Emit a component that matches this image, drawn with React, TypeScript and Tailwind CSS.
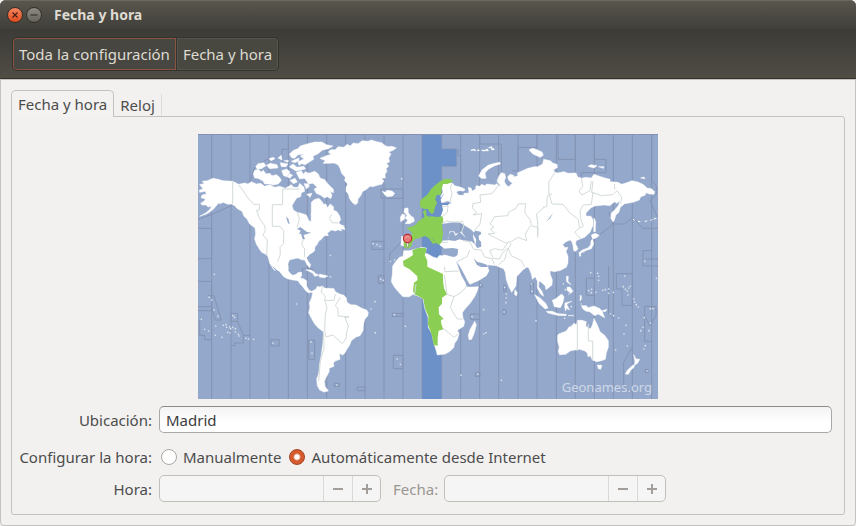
import { useState } from "react";
import type { ReactNode } from "react";

const ZONE_LINES = [
  41, 99, 156, 213, 271, 328, 386, 443, 501, 558, 615, 788, 845, 902, 960, 1017,
  1075, 1132, 1189, 1246, 1303, 1361,
];

function Dots({ points }: { points: number[][] }) {
  return (
    <>
      {points.map(([x, y]) => (
        <circle key={`${x}-${y}`} cx={x} cy={y} r="2.5" />
      ))}
    </>
  );
}

function WorldMap() {
  return (
    <svg viewBox="0 0 1380 795" className="block w-full" role="img" aria-label="Zonas horarias">
      <rect width="1380" height="795" fill="#94a8cb" />
      {/* selected zone */}
      <path d="M672 0H731V45H775V97H731V795H672Z" fill="#6c91c8" />

      {/* zone borders over the sea */}
      <g fill="none" stroke="#8393b4" strokeWidth="3">
        {ZONE_LINES.map((x) => (
          <path key={x} d={`M${x} 0V795`} />
        ))}
        <path d="M0 1.5H1380" />
        <path d="M672 0V795M731 0V45H775V97H731V795" strokeWidth="2" />
        <path d="M0 256L45 240L104 213M0 283H41V374H0M156 145L170 100L213 72M252 80V46H271" />
        <path d="M0 442H41V530H0M28 485H48L70 558H52L41 520M99 538H119V562H99ZM119 562L136 605V627H110V635H99M136 604H156M0 518H41M5 560V604H20V617H41" />
        <path d="M219 617H244V636H219ZM332 619H350V676H332ZM313 420V404H345" />
        <path d="M549 165H615V193H549ZM522 322H558V346H522ZM575 385V360L615 318M541 425H558V448H541ZM583 538H615V547H583ZM586 664H615V704H586ZM478 759H501V770H478ZM409 748H424V757H409Z" />
        <path d="M780 45V65H788V150M845 0V30H910V125M943 110H960V40H1017V0M1080 0V76H1132V0M1189 0V76H1224V116H1150V128" />
        <path d="M1361 0V140L1375 155V180L1356 200L1378 250M1232 235L1245 270H1280L1303 250L1335 283H1380M1245 270L1190 315L1185 330M1361 283V350H1335V396H1380M1345 375H1380" />
        <path d="M845 540H818V556H845M832 716H846V727H832ZM846 450H853V459H846ZM917 453H924V472H917ZM915 527H923V541H915ZM997 448H1007V480H997Z" />
        <path d="M1189 433H1165V484H1189M1232 396V540L1246 555M1255 465V419H1303V514H1272V465ZM1303 640L1277 685V760L1303 775M1340 622V517H1374V545L1355 575L1340 545M1340 622H1361M1342 706H1350V715H1342Z" />
      </g>

      <g fill="#fff" stroke="#fff" strokeWidth="1.5" strokeLinejoin="round">
        {/* Alaska, Canada and the United States */}
        <path d="M5 152L20 148L12 142L28 140L45 133L60 136L75 140L104 142L122 151L140 147L150 150L160 143L175 150L188 148L200 157L215 152L230 160L245 157L262 163L280 152L287 160L300 160L305 148L318 160L320 172L310 176L308 188L296 192L288 205L282 215L286 228L297 235L310 238L325 243L329 252L333 261L341 263L344 250L340 242L346 230L350 212V350L343 356L335 361L326 371L330 381L338 392L335 401L327 392L320 378L310 377L300 372L285 375L274 378L270 390V405L240 410L226 398L221 392L214 376L210 366L200 359L191 355L184 345L175 330L170 315L173 300L171 282L162 275L155 270L147 255L138 247L132 232L118 224L110 215L100 210L90 211L75 205L67 209L62 207L55 215L46 226L35 234L25 240L5 247L24 236L36 226L41 217L30 219L25 213L12 213L8 208L20 200L22 195L9 191L12 183L25 180L22 172L5 175L4 169L15 164Z" />
        <path d="M210 366L216 375L224 399L232 411L226 405L215 388Z" />
        {/* Central America */}
        <path d="M232 392H270L271 410L276 418L284 424L295 421L299 416L311 414L311 425L306 432L316 434L326 440L326 456L333 469L341 472L350 468L349 477L339 475L332 477L323 470L315 459L307 451L300 440L285 438L270 435L258 429L245 413Z" />
        <path d="M166 120L170 109L181 106L190 114L196 109L204 120L215 118L222 125L235 122L244 129L250 139L241 150L225 153L215 150L200 150L195 141L180 133L170 132Z" />
        <path d="M173 98L180 89L197 86L204 95L190 104L178 105ZM206 94L216 88L237 92L240 102L226 103L215 104ZM213 74L225 70L231 74L219 80ZM240 72L250 64L252 78ZM247 86L270 90L264 98L250 98ZM251 110L266 105L276 114L267 128L257 125ZM274 119L284 123L276 133L268 129ZM276 139L291 133L298 144L286 149ZM274 98L285 90L297 100L318 97L322 105L294 111ZM258 80L271 79L270 85ZM280 82L303 72L302 81L290 86Z" />
        <path d="M274 61L286 49L300 44L307 36L330 29L350 24L372 24L385 32L405 36L391 44L374 48L359 60L345 66L347 76L334 84L322 92L311 89L303 94L300 83L318 75L307 66L318 60L300 62L290 73L281 71Z" />
        <path d="M295 115L310 110L316 121L322 113L333 118L350 112L361 120L366 132L380 137L390 150L406 166L407 176L397 172L402 184L398 194L388 188L379 192L368 184L355 178L348 166L357 160L345 148L332 150L320 133L305 135L300 126ZM318 149L331 149L334 157L325 165ZM326 181L342 178L336 190Z" />
        {/* Quebec and Labrador */}
        <path d="M340 205L348 197L362 193L370 200L377 211L384 210L388 221L397 210L407 219L406 228L417 233L425 246L428 257L422 267L430 273L437 275L441 287L430 284L430 291L420 287L413 291L400 288L388 298L391 305L379 305L371 315L362 322L358 331L351 338L347 352L338 357Z" />
        {/* Greenland */}
        <path d="M366 73L378 68L388 64L399 62L391 54L398 47L412 47L420 38L438 40L447 31L457 36L466 27L480 29L493 20L510 22L520 18L536 23L551 26L562 35L570 38L582 37L595 42L585 49L572 54L579 60L572 73L575 83L566 88L572 97L564 104L567 112L561 121L562 132L550 133L558 141L551 151L538 154L525 158L516 157L504 167L493 173L489 184L480 195L479 207L472 212L462 205L455 194L451 180L444 172L444 161L449 150L440 140L442 130L431 118L426 103L420 92L408 87L392 88L375 88L382 80Z" />
        <path d="M553 172L561 175L568 169L582 171L590 178L584 186L568 188L560 182Z" />
        <path d="M620 223L630 222L631 236L639 246L647 251L649 262L635 269L622 269L629 259L622 252L627 244L618 235ZM607 250L613 240L621 243L620 255L608 263Z" />
        <path d="M611 307L619 309L617 336L609 334Z" />
        <path d="M323 407L337 408L350 415L345 418L331 411ZM342 413L363 424L350 427ZM364 420L389 426L380 431L364 429ZM395 428L400 429Z" />
        {/* South America */}
        <path d="M345 471L354 465L358 457L366 459L373 456L381 463L396 463L408 464L412 473L425 480L438 484L445 492L447 505L458 512L474 513L490 522L506 528L511 536L509 546L501 555L497 568L495 590L486 605L474 609L460 620L454 635L447 645L440 658L434 663L424 658L426 676L412 681L406 687L408 697L393 703L394 712L385 729L379 742L381 757L391 771L378 774L365 768L358 755L356 735L362 719L365 690L370 661L374 633L377 594L361 582L350 570L340 552L332 536L336 520L334 507L341 491Z" />
        {/* Africa */}
        <path d="M584 396L590 387L604 370L615 367L617 350L635 350L672 340L685 342L682 358L690 360L705 369L718 373L723 365L740 362L759 368L772 369L779 396L790 425L801 445L806 459L827 459L841 458L839 468L831 486L817 507L801 525L793 536L795 552L800 563L797 577L778 589L783 599L778 617L770 628L767 641L756 652L742 660L718 663L714 648L708 630L702 600L691 580L690 550L680 522L675 494L665 488L645 481L634 488L615 488L602 475L589 459L580 443L583 420Z" />
        <path d="M830 562L835 572L829 596L821 616L813 617L811 603L816 587Z" />
        {/* Europe and Asia */}
        <path d="M730 152L745 148L763 147L770 155L789 160L801 166L798 171L782 170L775 174L781 183L797 184L798 178L813 177L811 160L820 163L822 172L833 165L834 155L846 157L850 151L861 155L866 150L890 153L896 149L910 160L897 142L903 126L910 116L920 119L923 130L919 142L924 152L932 158L943 148L932 139L929 129L936 121L947 124L947 129L960 125L958 117L978 108L990 103L1009 98L1020 98L1034 90L1037 76L1057 80L1065 88L1077 91L1078 101L1067 107L1069 113L1078 117L1098 113L1110 118L1134 117L1139 129L1152 133L1162 130L1180 132L1188 121L1202 126L1221 132L1236 136L1236 143L1260 145L1271 151L1290 145L1302 140L1319 144L1335 151L1347 162L1360 164L1370 173L1368 181L1355 180L1344 176L1341 184L1328 188L1324 198L1305 205L1280 209L1267 220L1262 236L1254 242L1249 258L1245 264L1238 252L1240 237L1250 228L1261 215L1266 201L1256 208L1250 203L1235 215L1218 213L1190 216L1178 222L1164 237L1164 246L1179 247L1185 258L1185 274L1176 295L1160 310L1146 315L1134 320L1133 330L1140 344L1134 352L1127 350L1125 335L1122 324L1116 318L1104 323L1094 332L1101 341L1110 340L1104 352L1110 367L1110 386L1105 400L1088 409L1070 413L1057 410L1056 419L1063 438L1062 453L1048 464L1044 467L1042 456L1030 445L1023 441L1022 459L1032 472L1037 487L1027 479L1018 462L1018 442L1012 428L1003 436L1000 421L993 403L987 399L975 407L956 428L954 455L945 469L941 475L932 457L925 437L922 415L917 404L905 400L895 395L870 392L870 402L873 410L865 425L843 439L816 451L808 439L799 424L789 408L778 391L771 370L779 361L780 345L764 342L740 344L728 335L724 330L735 320H750L754 306L756 292L769 293L773 301L790 293L801 309L798 320L820 323L833 332L826 310L827 294L818 285L794 270L780 262L731 269L721 310L727 252L730 248L726 235L735 210L742 213L762 208L750 200L730 207L727 189L735 174Z" />
        <path d="M842 126L852 108L870 94L885 89L905 85L907 90L890 95L871 106L861 117L864 133L850 133ZM993 48L1003 43L1017 47L1032 54L1036 64L1026 70L1005 60ZM1170 97L1179 92L1197 95L1188 102ZM1202 98L1217 98L1217 103ZM1328 132L1338 129L1341 134Z" />
        <path d="M819 49L828 47L833 50M838 50L844 48M851 49L861 50L868 46L870 52M872 42L880 39L883 47L889 45" fill="none" strokeWidth="4" />
        {/* Japan */}
        <path d="M1188 252L1193 263L1192 293L1187 293ZM1180 303L1191 298L1204 304L1196 311L1184 315ZM1184 316L1187 330L1180 344L1168 348L1154 353L1146 361L1142 357L1153 348L1170 342L1178 332L1179 320ZM1145 356L1149 365L1144 367ZM1155 355L1160 353Z" />
        {/* Indonesia, Philippines and New Guinea */}
        <path d="M951 467L958 476L955 486L949 480ZM1010 482L1025 491L1043 508L1050 522L1042 525L1023 508ZM1045 532L1062 532L1080 539L1105 541L1104 545L1078 544L1050 537ZM1063 499L1073 494L1091 480L1098 488L1095 505L1087 521L1069 518ZM1101 507L1121 502L1106 510L1110 519L1115 528L1105 523L1103 531L1100 520ZM1105 427L1111 427L1110 442L1119 452L1106 443ZM1107 460L1116 459L1125 472L1118 478L1107 469ZM1147 483L1151 494L1146 501ZM1150 515L1165 515L1170 521L1188 516L1206 524L1213 533L1220 551L1200 540L1190 545L1175 533L1163 531L1154 524ZM1110 545L1125 544ZM1210 531L1227 526L1222 533Z" />
        {/* Australia and New Zealand */}
        <path d="M1079 605L1082 600L1105 591L1113 579L1120 577L1128 568L1135 572L1139 559H1152L1165 563L1163 576L1177 585L1183 574L1188 553L1195 567L1201 580L1206 593L1220 604L1231 620L1231 640L1225 656L1222 676L1210 680L1196 683L1183 678L1177 665L1170 668L1168 657L1161 651L1145 646L1118 650L1103 661L1085 662L1081 653L1084 639L1079 622ZM1198 693L1212 694L1208 706L1201 704Z" />
        <path d="M1307 662L1314 675L1325 676L1320 686L1309 695L1311 683ZM1306 692L1309 699L1298 709L1291 721L1282 720L1288 709Z" />
        <path d="M1305 255L1310 259M1320 262L1327 263M1340 262L1348 261M1357 259L1363 257M1367 255L1375 253" strokeWidth="3" />
      </g>

      {/* countries of the selected zone */}
      <g fill="#8ace53">
        <path d="M665 208L668 198L688 182L700 164L713 152L731 139L745 134L764 137L763 143L748 150L735 150L731 167L729 182L716 183L712 196L717 207L711 220L709 235L701 240L693 232L690 225L678 225L668 220ZM675 231L684 227L685 243L691 249L680 251Z" />
        <path d="M625 281L638 279L651 274L665 259L679 250L700 247L718 249L734 247L736 260L732 275L735 300L731 325L724 332L716 328L703 314L695 304L705 318L715 327L705 330L692 312L682 306L665 311L653 314L642 326L641 337L629 344L618 340L616 309L638 309L643 297L634 289Z" />
        <path d="M617 396L615 381L635 370L645 363L643 349L660 342L683 341L685 351L680 363L688 380L688 398L735 420L735 440L738 463L747 481L732 491L732 509L722 520L723 541L737 555L729 558L730 570L736 586L722 590L719 610L719 635L707 633L702 606L696 587L690 572L691 547L681 523L676 495L665 488L649 481L645 471L648 446L658 439L658 427L635 406Z" />
      </g>

      {/* inland water */}
      <g fill="#94a8cb">
        <path d="M297 285L307 279L320 289L327 294L340 296L327 300L317 303L321 316L314 316L309 299L303 300L308 290ZM264 248L271 254L275 270L270 268Z" />
        <path d="M750 318L753 303L759 292L769 296L771 305L777 302L783 292L792 300L804 313L799 320L785 316L770 321Z" />
        <path d="M824 297L833 290L848 293L850 300L842 305L843 317L849 323L850 338L838 342L832 334L835 318Z" />
        <path d="M827 373L838 384L852 387L868 393L869 399H849L837 393ZM774 382L785 396L798 420L807 438L802 436L789 415ZM1065 236L1057 253L1043 264L1054 252Z" />
      </g>
      <path d="M731 188L736 181L739 178L727 198L731 207H755L749 213H732L735 228L729 245H693L708 240L711 220L721 209L712 196Z" fill="#6c91c8" />
      <path d="M731 337L738 344L764 343L780 345L778 364L767 368L740 361L731 366Z" fill="#94a8cb" />

      {/* zone borders over land */}
      <g fill="none" stroke="#d3dbda" strokeWidth="3" strokeLinejoin="round">
        <path d="M104 142V211M122 153L132 165L150 192L167 211H184V228L176 230L184 253L200 275L202 290L195 303L208 318L206 365M305 165H254V212H223V277H246L257 290V328L246 340L247 362L239 382M298 235L304 253L298 280M316 316L311 332L320 345L319 370M401 240L394 253L402 266L420 267" />
        <path d="M374 458L369 474L382 486L380 499L408 499L412 480M380 499L387 523L382 540L380 590L384 609L405 603L433 629L445 612V600L451 576L440 550H452V548L420 546L420 525L412 515L427 490M377 600L378 642L367 680L362 740" />
        <path d="M740 398V413L782 411M739 423L747 481L768 488L757 520L762 530L778 555L795 555M768 488L790 475L805 458M732 580L750 595L768 610L780 600M650 480L654 450" />
        <path d="M762 148L757 160L762 178L756 205M735 218L750 215L748 235L734 247M731 270L745 261L780 266L792 261L798 274L791 294M905 150L882 179L846 183L848 205L825 209L823 222L836 235L825 243L851 239L846 270L829 291M870 300L890 298L877 285L888 280L876 270L890 248L930 245L931 235L954 223L960 210L983 209L980 235L998 260L1000 275L1020 281L1019 310L1019 264L1015 240L1038 220M870 300L905 318L923 327L941 322L960 310L986 320L982 300L997 275" />
        <path d="M731 325L750 325M798 320L815 324L827 346L850 348L860 369L882 374L889 392M815 348L808 367L778 383M875 350L890 344L914 349L930 325M875 350L886 373L905 375L912 358L930 342M930 342L940 365L970 380L980 399M940 327L926 355L920 377L902 392" />
        <path d="M1071 115L1052 144L1053 180L1062 210L1095 211L1115 236L1141 257L1145 281L1130 295L1148 313M1035 220L1046 218L1048 185L1062 180M1150 132L1154 157L1143 172L1151 183L1176 170L1180 141M1185 141L1181 175L1210 185L1244 182L1257 170L1271 190L1268 209M1185 175L1180 211L1156 213L1146 230L1148 253L1156 277L1145 283M1250 150L1250 167" />
        <path d="M1138 560V651M1171 570V621H1184V678" />
      </g>

      {/* small islands */}
      <g fill="#dfe6ee">
        <Dots
          points={[
            [49, 421], [33, 490], [41, 498], [48, 528], [60, 547], [10, 556], [20, 586], [32, 591], [53, 576],
            [52, 604], [72, 610], [76, 574], [84, 572], [86, 580], [95, 579], [98, 584], [89, 595], [96, 597],
            [104, 580], [112, 584], [112, 594], [121, 601], [123, 606], [105, 545], [110, 550], [144, 613],
            [152, 615], [167, 616], [225, 628], [296, 510], [339, 623], [342, 658], [437, 276], [397, 364],
            [525, 329], [537, 332], [546, 337], [577, 382], [590, 378], [548, 436], [556, 439], [531, 503],
            [519, 525], [532, 596], [589, 542], [622, 577], [597, 675], [607, 691], [416, 753], [611, 134],
            [848, 453], [857, 527], [822, 548], [857, 600], [864, 596], [839, 720], [789, 724], [910, 739],
            [920, 460], [925, 480], [925, 492], [924, 506], [918, 534], [1000, 450], [1002, 472], [1014, 560],
          ]}
        />
        <Dots
          points={[
            [1178, 416], [1199, 418], [1202, 427], [1202, 439], [1172, 470], [1181, 466], [1180, 476], [1194, 475],
            [1214, 469], [1222, 467], [1232, 465], [1232, 478], [1246, 475], [1280, 426], [1276, 458], [1282, 466],
            [1288, 471], [1292, 462], [1297, 457], [1290, 483], [1307, 495], [1310, 504], [1315, 512], [1321, 519],
            [1357, 524], [1365, 524], [1357, 568], [1353, 590], [1335, 580], [1328, 590], [1342, 635], [1338, 645],
            [1253, 648], [1278, 600], [1284, 574], [1237, 540], [1247, 545], [1262, 552], [1288, 636], [1347, 711],
            [1340, 382], [1339, 551], [1375, 433], [1113, 480], [1096, 450], [1102, 467], [1150, 510], [1150, 487],
            [1120, 518], [1100, 553], [1125, 545],
          ]}
        />
      </g>
    </svg>
  );
}

function Pin() {
  return (
    <svg viewBox="0 0 11 18" className="absolute left-[44.3%] top-[37.3%] w-[2.4%]" aria-hidden="true">
      <path d="M4.5 9H6.5V13L5.5 14.5L4.5 13Z" fill="#e9efe3" stroke="#7d8a72" strokeWidth=".6" />
      <circle cx="5.5" cy="5.5" r="4.2" fill="#e87878" stroke="#b52026" />
      <path d="M3.2 5A2.6 2.6 0 0 1 7.8 5Q5.5 3.7 3.2 5Z" fill="#f6b9b9" />
    </svg>
  );
}

function SpinBox({ id, name }: { id: string; name: string }) {
  return (
    <div className="flex h-[27px] w-[222px] overflow-hidden rounded-[5px] border border-[#c1bfbc] bg-[#f5f5f5]">
      <input id={id} type="text" disabled className="min-w-0 flex-1 bg-transparent px-1.5" />
      <button
        type="button"
        disabled
        aria-label={`Restar ${name}`}
        className="flex w-[29px] items-center justify-center border-l border-[#dad9d8]"
      >
        <svg viewBox="0 0 12 12" className="size-3" aria-hidden="true">
          <path d="M1 6H11" stroke="#a39e99" strokeWidth="2" />
        </svg>
      </button>
      <button
        type="button"
        disabled
        aria-label={`Sumar ${name}`}
        className="flex w-7 items-center justify-center border-l border-[#dad9d8]"
      >
        <svg viewBox="0 0 12 12" className="size-3" aria-hidden="true">
          <path d="M1 6H11M6 1V11" stroke="#a39e99" strokeWidth="2" />
        </svg>
      </button>
    </div>
  );
}

function Radio({ checked, onChange, children }: { checked: boolean; onChange: () => void; children: ReactNode }) {
  return (
    <label className="flex items-center gap-1.5">
      <input
        type="radio"
        name="mode"
        checked={checked}
        onChange={onChange}
        className="size-4 shrink-0 appearance-none rounded-full border border-[#aaa7a3] bg-white checked:border-[#a33f1c] checked:bg-[radial-gradient(circle,#fff_2px,#d2562a_4px,#dc6a3d_100%)]"
      />
      {children}
    </label>
  );
}

export default function App() {
  const [auto, setAuto] = useState(true);
  const [city, setCity] = useState("Madrid");

  return (
    <div className="flex min-h-screen flex-col bg-[#f2f1f0] font-['Noto_Sans','Open_Sans',sans-serif] text-[15px] leading-5 text-[#4c4c4c]">
      <header className="rounded-t-md bg-[#3c3b37] text-[#dfdbd2]">
        <div className="flex h-[29px] items-center rounded-t-md border-t border-[#6b685f] bg-linear-to-b from-[#59564d] to-[#403f3a] px-[7px]">
          <button
            type="button"
            aria-label="Cerrar"
            className="flex size-4 items-center justify-center rounded-full border border-[#333029] bg-linear-to-b from-[#f58460] to-[#df4a17]"
          >
            <svg viewBox="0 0 8 8" className="size-2" aria-hidden="true">
              <path d="M1.5 1.5L6.5 6.5M6.5 1.5L1.5 6.5" stroke="#4a2013" strokeWidth="1.2" />
            </svg>
          </button>
          <button
            type="button"
            aria-label="Minimizar"
            className="ml-[3px] flex size-4 items-center justify-center rounded-full border border-[#333029] bg-linear-to-b from-[#8d8b83] to-[#65635c]"
          >
            <svg viewBox="0 0 8 8" className="size-2" aria-hidden="true">
              <path d="M.5 4H7.5" stroke="#35332e" strokeWidth="1.2" />
            </svg>
          </button>
          <h1 className="ml-3 text-sm font-bold">Fecha y hora</h1>
        </div>
        <nav className="flex h-[50px] items-center border-b border-[#33312c] bg-linear-to-b from-[#3c3b37] to-[#504d45] px-3">
          <button
            type="button"
            className="h-[34px] rounded-l-[5px] border border-[#33322e] bg-[#474640] px-1.5 shadow-[inset_0_0_0_1px_#8a5540]"
          >
            Toda la configuración
          </button>
          <button
            type="button"
            className="h-[34px] rounded-r-[5px] border border-l-0 border-[#33322e] bg-[#484740] px-1.5 shadow-[inset_0_0_0_1px_#56544d]"
          >
            Fecha y hora
          </button>
        </nav>
      </header>

      <main className="flex flex-1 flex-col rounded-b-sm border border-[#c4c2be] px-2.5 py-2.5">
        <div role="tablist" className="relative z-10 flex items-end">
          <button
            type="button"
            role="tab"
            aria-selected="true"
            className="-mb-px h-[27px] rounded-t-[5px] border border-b-0 border-[#c4c2be] bg-[#f3f2f1] px-1.5"
          >
            Fecha y hora
          </button>
          <button type="button" role="tab" aria-selected="false" className="h-[22px] border-r border-[#dfdddb] px-1.5">
            Reloj
          </button>
        </div>

        <section className="flex-1 rounded-b-[3px] rounded-tr-[3px] border border-[#c4c2be] px-3 pt-[17px] pb-3">
          <div className="relative mx-auto w-[460px] max-w-full">
            <WorldMap />
            <Pin />
            <span className="absolute right-1.5 bottom-0.5 text-[13px] text-[#cfd8e8]">Geonames.org</span>
          </div>

          <form className="mt-[7px] grid grid-cols-[128px_1fr] items-center gap-x-[7px]">
            <label htmlFor="city" className="text-right">
              Ubicación:
            </label>
            <input
              id="city"
              type="text"
              value={city}
              onChange={(e) => setCity(e.target.value)}
              className="h-[27px] min-w-0 rounded-[5px] border border-[#aaa8a5] border-t-[#8c8b89] bg-linear-to-b from-[#f3f3f3] to-white to-60% px-1.5 text-[#3c3c3c]"
            />

            <span className="mt-3 mb-1.5 flex h-6 items-center justify-end whitespace-nowrap">Configurar la hora:</span>
            <div className="mt-3 mb-1.5 flex h-6 items-center gap-2 pl-0.5">
              <Radio checked={!auto} onChange={() => setAuto(false)}>
                Manualmente
              </Radio>
              <Radio checked={auto} onChange={() => setAuto(true)}>
                Automáticamente desde Internet
              </Radio>
            </div>

            <label htmlFor="time" className="text-right">
              Hora:
            </label>
            <div className="flex items-center">
              <SpinBox id="time" name="hora" />
              <label htmlFor="date" className="mr-1.5 ml-3 text-[#999692]">
                Fecha:
              </label>
              <SpinBox id="date" name="fecha" />
            </div>
          </form>
        </section>
      </main>
    </div>
  );
}
